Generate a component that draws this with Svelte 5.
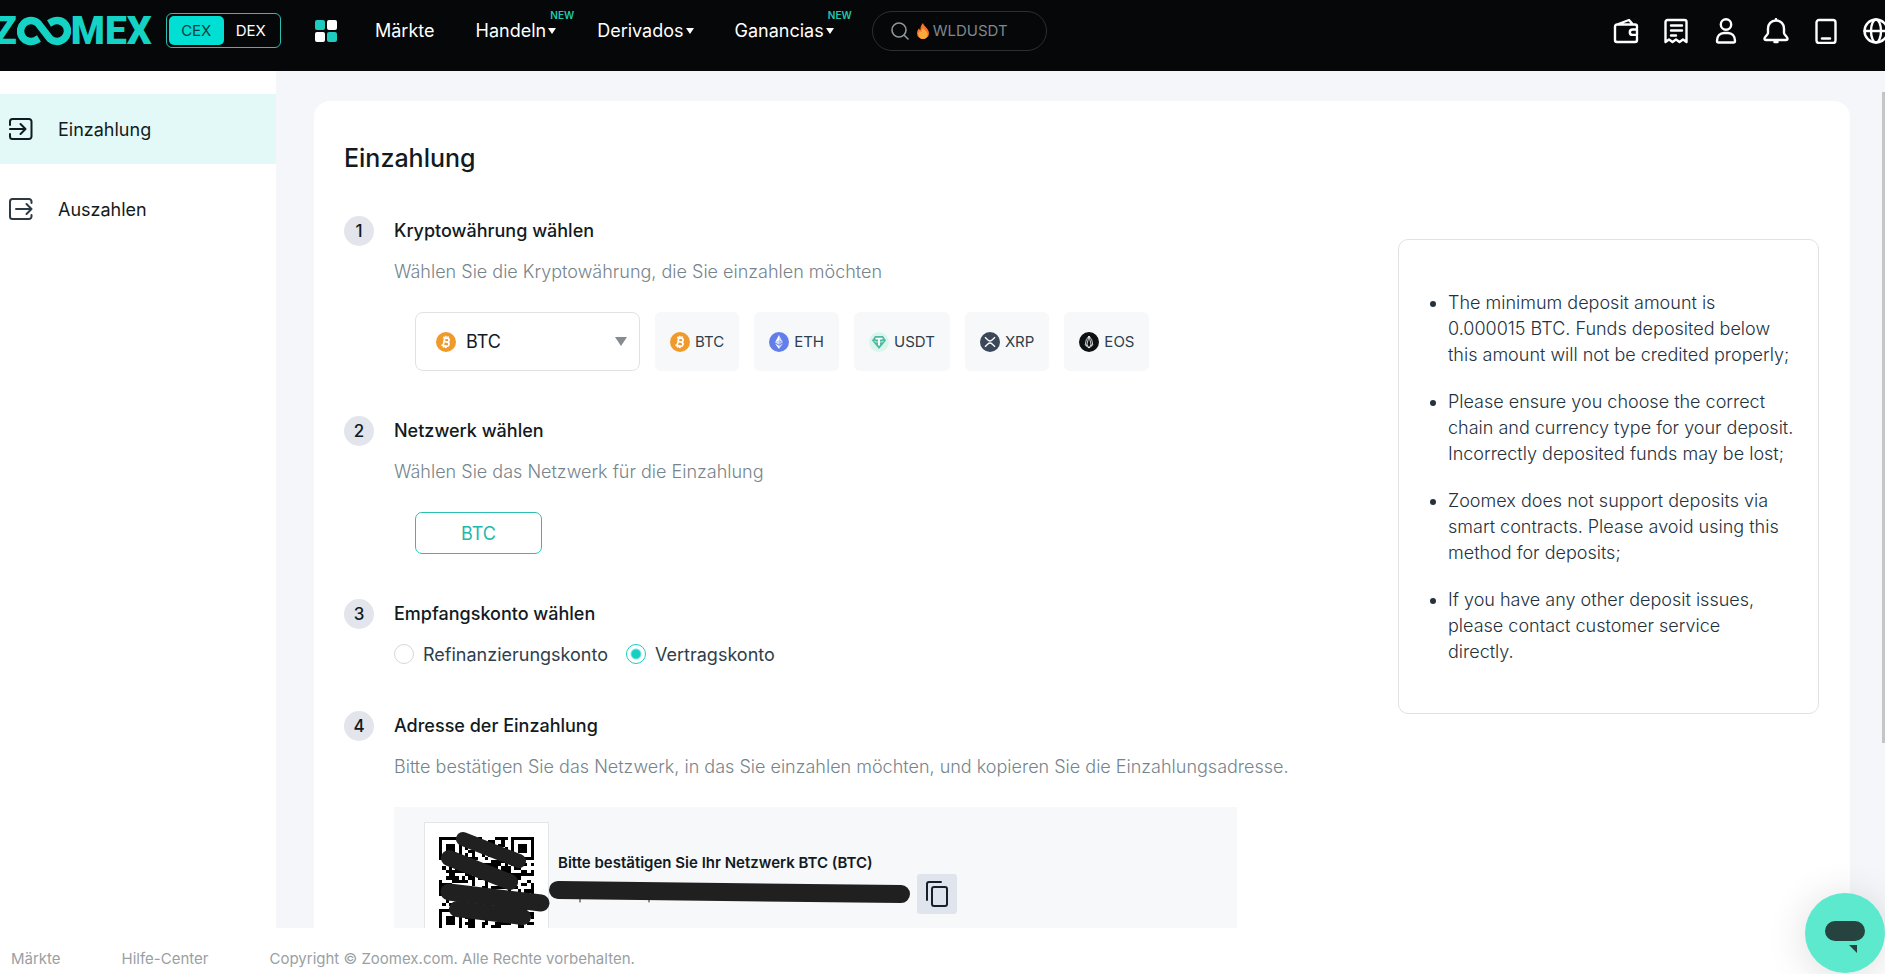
<script lang="ts">
  type Coin = 'BTC' | 'ETH' | 'USDT' | 'XRP' | 'EOS';

  const coins: Coin[] = ['BTC', 'ETH', 'USDT', 'XRP', 'EOS'];

  const navItems = [
    { label: 'Märkte', menu: false, isNew: false },
    { label: 'Handeln', menu: true, isNew: true },
    { label: 'Derivados', menu: true, isNew: false },
    { label: 'Ganancias', menu: true, isNew: true }
  ];

  const notes = [
    'The minimum deposit amount is 0.000015 BTC. Funds deposited below this amount will not be credited properly;',
    'Please ensure you choose the correct chain and currency type for your deposit. Incorrectly deposited funds may be lost;',
    'Zoomex does not support deposits via smart contracts. Please avoid using this method for deposits;',
    'If you have any other deposit issues, please contact customer service\ndirectly.'
  ];

  let coin: Coin = $state('BTC');
  let account = $state('contract');
  let exchange = $state('CEX');

  const QR_SIZE = 29;

  function inFinder(x: number, y: number): boolean {
    const left = x < 8;
    const right = x >= QR_SIZE - 8;
    const top = y < 8;
    const bottom = y >= QR_SIZE - 8;
    return (left && top) || (right && top) || (left && bottom);
  }

  function buildQr(): string {
    let seed = 7;
    let d = '';
    for (let y = 0; y < QR_SIZE; y++) {
      for (let x = 0; x < QR_SIZE; x++) {
        seed = (seed * 1103515245 + 12345) % 2147483648;
        if (!inFinder(x, y) && seed / 2147483648 > 0.5) d += `M${x} ${y}h1v1h-1z`;
      }
    }
    return d;
  }

  const qrPath = buildQr();
  const finders = [[0, 0], [QR_SIZE - 7, 0], [0, QR_SIZE - 7]];
</script>

{#snippet coinIcon(name: Coin)}
  <svg class="coin" viewBox="0 0 20 20" aria-hidden="true">
    {#if name === 'BTC'}
      <circle cx="10" cy="10" r="10" fill="#f09a2c" />
      <g transform="rotate(12 10 10)" fill="none" stroke="#fff" stroke-width="1.7">
        <path d="M6.2 6h4.6a1.9 1.9 0 0 1 0 3.8H8h3.3a2.1 2.1 0 0 1 0 4.2H6.2M8 6v8M8.7 4v2M11 4v2M8.7 14v2M11 14v2" />
      </g>
    {:else if name === 'ETH'}
      <circle cx="10" cy="10" r="10" fill="#627eea" />
      <path d="M10 3v5.4l-4 2z" fill="#fff" />
      <path d="M10 3v5.4l4 2z" fill="#d3dbfa" />
      <path d="M6 10.4l4-1.9v4.2z" fill="#d3dbfa" />
      <path d="M14 10.4l-4-1.9v4.2z" fill="#a9b9f4" />
      <path d="M6 11.4l4 2.3V17z" fill="#fff" />
      <path d="M14 11.4l-4 2.3V17z" fill="#d3dbfa" />
    {:else if name === 'USDT'}
      <circle cx="10" cy="10" r="10" fill="#d9f5ec" />
      <path d="M6 4h8l3 4.6L10 17 3 8.6z" fill="#4fb99f" />
      <path d="M6.5 6.6h7M10 6.6v7" fill="none" stroke="#fff" stroke-width="1.8" />
      <path d="M5.5 9.4c2 1 7 1 9 0" fill="none" stroke="#fff" stroke-width="0.7" />
    {:else if name === 'XRP'}
      <circle cx="10" cy="10" r="10" fill="#3b4859" />
      <path d="M5 5.2l2.6 2.6a3.4 3.4 0 0 0 4.8 0L15 5.2M5 14.8l2.6-2.6a3.4 3.4 0 0 1 4.8 0l2.6 2.6" fill="none" stroke="#fff" stroke-width="1.3" />
    {:else}
      <circle cx="10" cy="10" r="10" fill="#0e1113" />
      <path d="M10 4L7.3 7.6 6.2 13 10 16l3.8-3-1.1-5.4zM10 4l-2.5 10.2M10 4l2.5 10.2M8 12.5l2 3.5 2-3.5" fill="none" stroke="#fff" stroke-width="0.8" stroke-linejoin="round" />
    {/if}
  </svg>
{/snippet}

<div class="page">
  <header class="topbar">
    <a class="logo" href="#home" aria-label="Zoomex">
      <span>Z</span>
      <svg viewBox="0 0 54 30" aria-hidden="true">
        <path d="M22 22.5L19 24.300A10.500 10.500 0 1 1 21 7.200L33 22.800A10.500 10.500 0 1 0 35 5.700L32 7.500" fill="none" stroke="#14d3c5" stroke-width="7.500" stroke-linejoin="round" />
      </svg>
      <span>MEX</span>
    </a>

    <div class="exchange">
      {#each ['CEX', 'DEX'] as kind}
        <button class:active={exchange === kind} onclick={() => (exchange = kind)}>{kind}</button>
      {/each}
    </div>

    <button class="icon-btn apps" aria-label="Apps">
      <svg width="22" height="22" viewBox="0 0 22 22">
        <rect x="0" y="0" width="10" height="10" rx="2" fill="#1fcabf" />
        <rect x="12" y="0" width="10" height="10" rx="2" fill="#fff" />
        <rect x="0" y="12" width="10" height="10" rx="2" fill="#fff" />
        <rect x="12" y="12" width="10" height="10" rx="2" fill="#1fcabf" />
      </svg>
    </button>

    <nav class="main-nav">
      {#each navItems as item}
        <a href="#{item.label.toLowerCase()}">
          {item.label}
          {#if item.menu}<i class="caret"></i>{/if}
          {#if item.isNew}<span class="new">NEW</span>{/if}
        </a>
      {/each}
    </nav>

    <label class="search">
      <svg width="18" height="18" viewBox="0 0 18 18" fill="none" stroke="#8f979e" stroke-width="1.6" stroke-linecap="round">
        <circle cx="8" cy="8" r="7" />
        <path d="M13 13l4 4" />
      </svg>
      <svg width="12" height="16" viewBox="0 0 12 16">
        <path d="M6 0c.5 3 6 5.500 6 10.200A5.800 5.800 0 0 1 6 16 5.800 5.800 0 0 1 0 10.200C0 8 1 6.500 2 5.200c.3 1 .8 1.500 1.400 1.800C3.300 4 4.500 1.500 6 0z" fill="#f4722b" />
        <path d="M6 5c.8 1.800 4.600 3.500 4.600 6.400a4.600 4.600 0 0 1-9.200 0c0-1.800.8-2.800 1.600-3.600.3.800.8 1.200 1.400 1.200C4.600 7.500 5.200 6 6 5z" fill="#fda83a" />
      </svg>
      <input type="text" placeholder="WLDUSDT" aria-label="Suche" />
    </label>

    <div class="tools">
      <button class="icon-btn" aria-label="Wallet">
        <svg width="26" height="26" viewBox="0 0 26 26">
          <path d="M24 10V8.500a2 2 0 0 0-2-2H4a2 2 0 0 0-2 2V22a2 2 0 0 0 2 2h18a2 2 0 0 0 2-2v-3.500M24 11.500h-4.500a2.700 2.700 0 0 0 0 5.400H24zM4 6.500L16 2l3.500 4" />
        </svg>
      </button>
      <button class="icon-btn" aria-label="Aufträge">
        <svg width="26" height="26" viewBox="0 0 26 26">
          <path d="M2.500 24V4a2 2 0 0 1 2-2h17a2 2 0 0 1 2 2v20l-3.500-2.500-3.500 2.500-3.500-2.500L9.500 24 6 21.500zM8 7.500h11M8 12.500h11M8 17.500h5" />
        </svg>
      </button>
      <button class="icon-btn" aria-label="Konto">
        <svg width="26" height="26" viewBox="0 0 26 26">
          <circle cx="13" cy="6.500" r="5.200" />
          <path d="M4 23c0-5 3-8 7-8h4c4 0 7 3 7 8a1.500 1.500 0 0 1-1.500 1.500h-15A1.500 1.500 0 0 1 4 23z" />
        </svg>
      </button>
      <button class="icon-btn" aria-label="Mitteilungen">
        <svg width="26" height="26" viewBox="0 0 26 26">
          <path d="M13 2.500c-5 0-8 3.500-8 8V15c0 1.500-3.500 4-3.500 5.500 0 .8.500 1.500 1.500 1.500h20c1 0 1.500-.7 1.500-1.500C24.500 19 21 16.500 21 15v-4.500c0-4.500-3-8-8-8zM13 1v1M11.500 24h3" />
        </svg>
      </button>
      <button class="icon-btn" aria-label="App">
        <svg width="26" height="26" viewBox="0 0 26 26">
          <rect x="3.500" y="2" width="19" height="23" rx="2.500" />
          <path d="M9 20.500h8" />
        </svg>
      </button>
      <button class="icon-btn" aria-label="Sprache">
        <svg width="26" height="26" viewBox="0 0 26 26">
          <circle cx="13" cy="13" r="11.500" />
          <ellipse cx="13" cy="13" rx="5" ry="11.500" />
          <path d="M1.500 13h23" />
        </svg>
      </button>
    </div>
  </header>

  <div class="body">
    <aside class="sidebar">
      <a class="side-item active" href="#einzahlung">
        <svg width="26" height="24" viewBox="0 0 26 24">
          <path d="M2 8V4.500A2.500 2.500 0 0 1 4.500 2H21a2.500 2.500 0 0 1 2.500 2.500v15A2.500 2.500 0 0 1 21 22H4.500A2.500 2.500 0 0 1 2 19.500V17M2 12h15M12.500 7l5 5-5 5" />
        </svg>
        Einzahlung
      </a>
      <a class="side-item" href="#auszahlen">
        <svg width="26" height="24" viewBox="0 0 26 24">
          <path d="M23.500 6V4.500A2.500 2.500 0 0 0 21 2H4.500A2.500 2.500 0 0 0 2 4.500v15A2.500 2.500 0 0 0 4.500 22H21a2.500 2.500 0 0 0 2.500-2.500V18M8 12h15.500M18.500 7l5 5-5 5" />
        </svg>
        Auszahlen
      </a>
    </aside>

    <main class="content">
      <div class="card">
        <div class="steps">
          <h1>Einzahlung</h1>

          <section class="step">
            <span class="number">1</span>
            <div class="step-body">
              <h2 id="coin-title">Kryptowährung wählen</h2>
              <p>Wählen Sie die Kryptowährung, die Sie einzahlen möchten</p>
              <div class="coins">
                <div class="select">
                  {@render coinIcon(coin)}
                  <select bind:value={coin} aria-labelledby="coin-title">
                    {#each coins as name}
                      <option value={name}>{name}</option>
                    {/each}
                  </select>
                  <i class="arrow"></i>
                </div>
                {#each coins as name}
                  <button class="chip" onclick={() => (coin = name)}>
                    {@render coinIcon(name)}
                    {name}
                  </button>
                {/each}
              </div>
            </div>
          </section>

          <section class="step">
            <span class="number">2</span>
            <div class="step-body">
              <h2>Netzwerk wählen</h2>
              <p>Wählen Sie das Netzwerk für die Einzahlung</p>
              <button class="network">BTC</button>
            </div>
          </section>

          <section class="step">
            <span class="number">3</span>
            <div class="step-body">
              <h2>Empfangskonto wählen</h2>
              <div class="accounts">
                <label>
                  <input type="radio" name="account" value="funding" bind:group={account} />
                  Refinanzierungskonto
                </label>
                <label>
                  <input type="radio" name="account" value="contract" bind:group={account} />
                  Vertragskonto
                </label>
              </div>
            </div>
          </section>

          <section class="step">
            <span class="number">4</span>
            <div class="step-body">
              <h2>Adresse der Einzahlung</h2>
              <p>Bitte bestätigen Sie das Netzwerk, in das Sie einzahlen möchten, und kopieren Sie die Einzahlungsadresse.</p>
              <div class="address">
                <div class="qr">
                  <svg width="95" height="95" viewBox="0 0 29 29" shape-rendering="crispEdges">
                    <path d={qrPath} />
                    {#each finders as [x, y]}
                      <rect x={x + 0.5} y={y + 0.5} width="6" height="6" fill="none" stroke="#000" />
                      <rect x={x + 2} y={y + 2} width="3" height="3" />
                    {/each}
                  </svg>
                </div>
                <div class="address-info">
                  <strong>Bitte bestätigen Sie Ihr Netzwerk BTC (BTC)</strong>
                  <button class="copy" aria-label="Adresse kopieren">
                    <svg width="24" height="28" viewBox="0 0 24 28" fill="none" stroke="#16202a" stroke-width="2" stroke-linecap="round" stroke-linejoin="round">
                      <rect x="7" y="7" width="15" height="19" rx="2" />
                      <path d="M2 20V4a2 2 0 0 1 2-2h12" />
                    </svg>
                  </button>
                </div>
                <!-- address and code are blacked out -->
                <svg class="marker" width="500" height="120" viewBox="0 0 500 120" aria-hidden="true">
                  <path d="M39 17L95 39" stroke-width="14" />
                  <path d="M25 36L86 60" stroke-width="16" />
                  <path d="M25 70L117 81" stroke-width="17" />
                  <path d="M33 87L99 95" stroke-width="16" />
                  <path d="M134 68L477 72" stroke-width="18" />
                  <path d="M156 77v3M225 77v3" stroke-width="1" />
                </svg>
              </div>
            </div>
          </section>
        </div>

        <aside class="notes">
          <ul>
            {#each notes as note}
              <li>{note}</li>
            {/each}
          </ul>
        </aside>
      </div>
    </main>
    <div class="scroll-thumb"></div>
  </div>

  <footer class="footer">
    <a href="#maerkte">Märkte</a>
    <a href="#hilfe">Hilfe-Center</a>
    <span>Copyright © Zoomex.com. Alle Rechte vorbehalten.</span>
  </footer>

  <button class="chat" aria-label="Chat">
    <svg width="40" height="32" viewBox="0 0 40 32" fill="#26433f">
      <rect width="40" height="20" rx="10" />
      <path d="M24 24h8v8z" />
    </svg>
  </button>
</div>

<style>
  :global(body) {
    margin: 0;
    overflow: hidden;
  }

  .page {
    display: flex;
    flex-direction: column;
    height: 100vh;
    overflow: hidden;
    background: #fff;
    color: #121a22;
    font-family: Inter, 'Liberation Sans', sans-serif;
    font-size: 18px;
  }

  .page * {
    box-sizing: border-box;
  }

  a {
    color: inherit;
    text-decoration: none;
  }

  button,
  input,
  select {
    font: inherit;
    color: inherit;
    cursor: pointer;
  }

  button {
    padding: 0;
    border: none;
    background: none;
  }

  .topbar {
    display: flex;
    align-items: center;
    flex: none;
    height: 71px;
    padding-bottom: 10px;
    background: #050708;
    color: #fff;
  }

  .logo {
    display: flex;
    align-items: center;
    margin-left: -7px;
    width: 173px;
    color: #14d3c5;
    font-family: Roboto, sans-serif;
    font-size: 39px;
    font-weight: 900;
    line-height: 40px;
  }

  .logo svg {
    flex: none;
    width: 54px;
    height: 30px;
  }

  .exchange {
    display: flex;
    flex: none;
    width: 115px;
    height: 35px;
    padding: 2px;
    border: 1px solid #2bbfb2;
    border-radius: 6px;
    font-size: 15px;
  }

  .exchange button {
    flex: 1;
    border-radius: 5px;
  }

  .exchange .active {
    background: #00dfd3;
    color: #0b3d3f;
  }

  .icon-btn {
    display: flex;
    flex: none;
  }

  .apps {
    margin: 0 38px 0 34px;
  }

  .main-nav {
    display: flex;
    gap: 41px;
    flex: none;
  }

  .main-nav a {
    position: relative;
    display: flex;
    align-items: center;
    gap: 2px;
  }

  .caret {
    border: 4px solid transparent;
    border-top: 6px solid #fff;
    border-bottom: 0;
  }

  .new {
    position: absolute;
    right: -18px;
    top: -11px;
    color: #1fc9ae;
    font-size: 10px;
    font-weight: 600;
    line-height: 12px;
  }

  .search {
    display: flex;
    align-items: center;
    gap: 8px;
    flex: none;
    width: 175px;
    height: 40px;
    margin-left: 38px;
    padding: 0 18px;
    border: 1px solid #2c3033;
    border-radius: 20px;
  }

  .search input {
    flex: 1;
    min-width: 0;
    margin-left: -4px;
    padding: 0;
    border: none;
    outline: none;
    background: none;
    font-size: 15px;
  }

  .search input::placeholder {
    color: #7f878e;
    opacity: 1;
  }

  .tools {
    display: flex;
    gap: 24px;
    margin-left: auto;
    margin-right: -4px;
    fill: none;
    stroke: #fff;
    stroke-width: 2.4;
    stroke-linecap: round;
    stroke-linejoin: round;
  }

  .body {
    position: relative;
    display: flex;
    flex: 1;
    min-height: 0;
    overflow: hidden;
    background: #f5f6fa;
  }

  .sidebar {
    display: flex;
    flex-direction: column;
    gap: 10px;
    flex: none;
    width: 276px;
    padding-top: 23px;
    background: #fff;
  }

  .side-item {
    display: flex;
    align-items: center;
    gap: 24px;
    height: 70px;
    padding-left: 8px;
  }

  .side-item svg {
    fill: none;
    stroke: #2c3a45;
    stroke-width: 2;
    stroke-linecap: round;
    stroke-linejoin: round;
  }

  .side-item.active {
    background: #e3f9f8;
  }

  .side-item.active svg {
    stroke: #121a22;
  }

  .content {
    flex: 1;
    min-width: 0;
    padding: 30px 35px 30px 38px;
  }

  .card {
    display: flex;
    min-height: 1080px;
    padding: 40px 31px 40px 30px;
    border-radius: 16px;
    background: #fff;
  }

  .steps {
    flex: 1;
    min-width: 0;
  }

  h1 {
    margin: 0 0 41px;
    font-size: 25px;
    font-weight: 500;
    line-height: 34px;
  }

  .step {
    display: flex;
    gap: 20px;
    margin-bottom: 45px;
  }

  .number {
    flex: none;
    width: 30px;
    height: 30px;
    border-radius: 50%;
    background: #e2e5eb;
    font-size: 17px;
    font-weight: 500;
    line-height: 30px;
    text-align: center;
  }

  .step-body {
    flex: 1;
    min-width: 0;
  }

  h2 {
    margin: 0 0 13px;
    font-size: 18px;
    font-weight: 500;
    line-height: 30px;
  }

  p {
    margin: 0 0 27px;
    color: #76848c;
    font-weight: 300;
    line-height: 26px;
  }

  .coins {
    display: flex;
    gap: 15px;
    padding-left: 21px;
  }

  .coin {
    flex: none;
    width: 20px;
    height: 20px;
  }

  .select {
    position: relative;
    display: flex;
    align-items: center;
    width: 225px;
    height: 59px;
    padding-left: 20px;
    border: 1px solid #dfe2e5;
    border-radius: 8px;
  }

  .select select {
    flex: 1;
    height: 100%;
    padding: 0 10px;
    border: none;
    outline: none;
    background: none;
    appearance: none;
  }

  .arrow {
    position: absolute;
    right: 12px;
    border: 6px solid transparent;
    border-top: 9px solid #868b90;
    border-bottom: 0;
    pointer-events: none;
  }

  .chip {
    display: flex;
    align-items: center;
    gap: 5px;
    height: 59px;
    padding: 0 15px;
    border-radius: 6px;
    background: #f7f8fa;
    color: #2f3e4a;
    font-size: 15px;
  }

  .network {
    display: block;
    width: 127px;
    height: 42px;
    margin-left: 21px;
    border: 1px solid #2bbfb2;
    border-radius: 7px;
    color: #22b8aa;
  }

  .accounts {
    display: flex;
    gap: 18px;
    height: 24px;
    color: #2f3e4a;
  }

  .accounts label {
    display: flex;
    align-items: center;
    gap: 9px;
  }

  .accounts input {
    width: 20px;
    height: 20px;
    margin: 0;
    border: 1px solid #d3d7db;
    border-radius: 50%;
    appearance: none;
  }

  .accounts input:checked {
    border-color: #14cfc3;
    background: radial-gradient(circle, #14cfc3 4px, #fff 6px);
  }

  .address {
    position: relative;
    display: flex;
    gap: 9px;
    width: 843px;
    height: 220px;
    padding: 15px 30px;
    background: #f7f8fa;
  }

  .qr {
    flex: none;
    width: 125px;
    height: 125px;
    padding: 14px;
    border: 1px solid #e3e6e9;
    background: #fff;
  }

  .address-info {
    display: flex;
    flex-direction: column;
    width: 399px;
    padding-top: 30px;
  }

  strong {
    font-size: 15px;
    font-weight: 600;
    line-height: 22px;
  }

  .copy {
    display: flex;
    align-items: center;
    justify-content: center;
    align-self: flex-end;
    width: 40px;
    height: 40px;
    border-radius: 3px;
    background: #e0e4ed;
  }

  .marker {
    position: absolute;
    left: 30px;
    top: 15px;
    fill: none;
    stroke: #202020;
    stroke-linecap: round;
    pointer-events: none;
  }

  .notes {
    flex: none;
    align-self: flex-start;
    width: 421px;
    margin-top: 98px;
    padding: 50px 22px 48px 49px;
    border: 1px solid #dfe2e5;
    border-radius: 10px;
    color: #24323e;
    font-weight: 300;
    line-height: 26px;
  }

  .notes ul {
    display: flex;
    flex-direction: column;
    gap: 21px;
    margin: 0;
    padding: 0;
  }

  .notes li {
    white-space: pre-line;
  }

  .scroll-thumb {
    position: absolute;
    right: 0;
    top: 21px;
    width: 3px;
    height: 76%;
    background: #c4c5c7;
  }

  .footer {
    display: flex;
    align-items: center;
    gap: 61px;
    flex: none;
    height: 46px;
    padding: 14px 11px 0;
    color: #9a9fa3;
    font-size: 15px;
  }

  .chat {
    position: fixed;
    right: 0;
    bottom: 1px;
    display: flex;
    justify-content: center;
    width: 80px;
    height: 80px;
    padding-top: 28px;
    border-radius: 50%;
    background: #5ce9cd;
    box-shadow: 0 4px 40px rgba(0, 0, 0, 0.14);
  }
</style>
